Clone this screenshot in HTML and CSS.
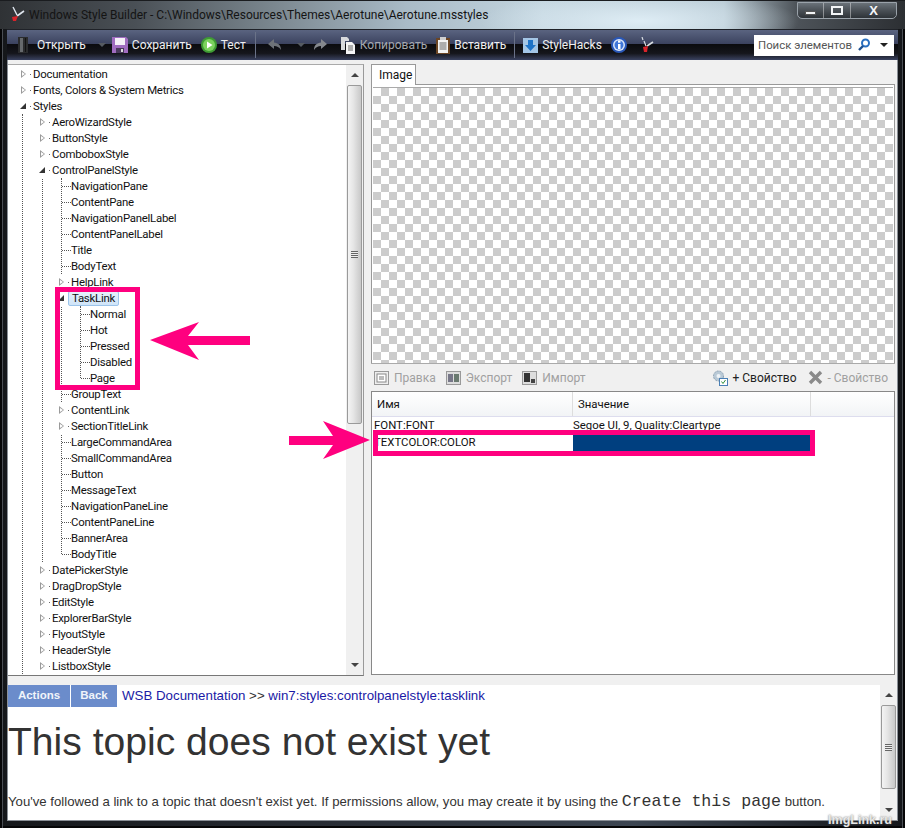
FILE: index.html
```html
<!DOCTYPE html>
<html lang="en">
<head>
  <meta charset="UTF-8" />
  <title>Windows Style Builder</title>
  <link rel="stylesheet" href="styles.css">
</head>
<body>
  <div class="window">
    <div class="titlebar">
      <svg class="app-icon" width="16" height="16" viewBox="0 0 16 16"><path d="M3 1l4 8" stroke="#dfe6ee" stroke-width="1.4"/><path d="M14 5L7 10" stroke="#dfe6ee" stroke-width="1.6"/><path d="M2 11l6-1-2 5H3z" fill="#d8232a"/></svg>
      <span class="title-text">Windows Style Builder - C:\Windows\Resources\Themes\Aerotune\Aerotune.msstyles</span>
      <div class="win-buttons">
        <div class="win-btn win-min"><span></span></div>
        <div class="win-btn win-max"><span></span></div>
        <div class="win-btn win-close">X</div>
      </div>
    </div>

    <div class="toolbar">
      <div class="tool tool-open">
        <svg width="12" height="16" viewBox="0 0 12 16"><rect x="1" y="0" width="10" height="16" fill="#2a2b2d"/><rect x="3" y="1" width="3" height="14" fill="#66696c"/><rect x="8" y="1" width="1" height="14" fill="#111"/></svg>
        <span>Открыть</span>
      </div>
      <span class="caret caret-dim caret-open"></span>
      <div class="tool tool-save">
        <svg width="16" height="16" viewBox="0 0 16 16"><path d="M0 0h14l2 2v14H0z" fill="#a06cc0"/><rect x="3" y="1" width="10" height="7" fill="#f5f0f8"/><rect x="4" y="11" width="8" height="5" fill="#4a3a5c"/><rect x="9" y="12" width="2" height="3" fill="#ddd"/></svg>
        <span>Сохранить</span>
      </div>
      <div class="tool tool-test">
        <svg width="16" height="16" viewBox="0 0 16 16"><circle cx="8" cy="8" r="8" fill="#3f9c33"/><circle cx="8" cy="8" r="6" fill="#7cd25e"/><path d="M6 4.500l5.500 3.500L6 11.500z" fill="#fff"/></svg>
        <span>Тест</span>
      </div>
      <span class="tool-sep sep-edit"></span>
      <svg class="tool-icon" width="16" height="14" viewBox="0 0 16 14"><path d="M7 1L1 6l6 5V8c3 0 5 1 7 4 0-5-3-7-7-7.500z" fill="#6e7278"/></svg>
      <span class="caret caret-dim caret-gap"></span>
      <svg class="tool-icon" width="16" height="14" viewBox="0 0 16 14"><path d="M9 1l6 5-6 5V8c-3 0-5 1-7 4 0-5 3-7 7-7.500z" fill="#85888e"/></svg>
      <div class="tool tool-copy">
        <svg width="16" height="17" viewBox="0 0 16 17"><path d="M1 0h6l2 2v2H5v9H1z" fill="#d8dadd"/><path d="M6 5h6l3 3v9H6z" fill="#f6f6f6"/><path d="M8 9h5M8 11h5M8 13h5" stroke="#666"/></svg>
        <span>Копировать</span>
      </div>
      <div class="tool tool-paste">
        <svg width="14" height="17" viewBox="0 0 14 17"><rect x="0" y="1" width="14" height="16" fill="#6b4524"/><rect x="2" y="3" width="10" height="13" fill="#f2f2f2"/><rect x="4" y="0" width="6" height="3" fill="#cfcfcf"/><path d="M3.500 6h7M3.500 8h7M3.500 10h7M3.500 12h7" stroke="#666"/></svg>
        <span>Вставить</span>
      </div>
      <span class="tool-sep sep-hacks"></span>
      <div class="tool tool-hacks">
        <svg width="15" height="15" viewBox="0 0 15 15"><rect width="15" height="15" fill="#a4c6e6"/><path d="M5 2h5v5h3l-5.500 6L2 7h3z" fill="#1f74c8"/></svg>
        <span>StyleHacks</span>
      </div>
      <svg class="tool-icon info-icon" width="16" height="16" viewBox="0 0 16 16"><circle cx="8" cy="8" r="8" fill="#2a58b8"/><circle cx="8" cy="8" r="6" fill="#dbe6f8"/><circle cx="8" cy="8" r="4.500" fill="#3f76d8"/><rect x="7" y="7" width="2.500" height="5" fill="#fff"/><rect x="7" y="3.500" width="2.500" height="2.200" fill="#fff"/></svg>
      <svg class="tool-icon brush-icon" width="14" height="16" viewBox="0 0 14 16"><path d="M2 0l1 3M4 4l2 5" stroke="#d8dde2" stroke-width="1.200"/><path d="M13 5L7 9" stroke="#d8dde2" stroke-width="1.600"/><path d="M3 10l5-1-1 6H4z" fill="#d8232a"/></svg>
      <div class="search">
        <span class="search-text">Поиск элементов</span>
        <svg width="14" height="14" viewBox="0 0 14 14"><circle cx="8.500" cy="5" r="3.500" fill="none" stroke="#2a6fc0" stroke-width="2"/><path d="M6 8l-4 4" stroke="#1c4f90" stroke-width="2.400"/></svg>
        <span class="caret caret-dark"></span>
      </div>
    </div>

    <div class="client">
      <div class="workspace">
        <div class="tree-pane">
          <div class="tree-scroll">
            <ul class="tree">
              <li><div class="row"><span class="twist"></span><i class="dot"></i>Documentation</div></li>
              <li><div class="row"><span class="twist"></span><i class="dot"></i>Fonts, Colors &amp; System Metrics</div></li>
              <li>
                <div class="row"><span class="twist open"></span><i class="dot"></i>Styles</div>
                <ul class="styles-list">
                  <li><div class="row"><span class="twist"></span><i class="dot"></i>AeroWizardStyle</div></li>
                  <li><div class="row"><span class="twist"></span><i class="dot"></i>ButtonStyle</div></li>
                  <li><div class="row"><span class="twist"></span><i class="dot"></i>ComboboxStyle</div></li>
                  <li>
                    <div class="row"><span class="twist open"></span><i class="dot"></i>ControlPanelStyle</div>
                    <ul>
                      <li><div class="row"><span class="leaf"></span>NavigationPane</div></li>
                      <li><div class="row"><span class="leaf"></span>ContentPane</div></li>
                      <li><div class="row"><span class="leaf"></span>NavigationPanelLabel</div></li>
                      <li><div class="row"><span class="leaf"></span>ContentPanelLabel</div></li>
                      <li><div class="row"><span class="leaf"></span>Title</div></li>
                      <li><div class="row"><span class="leaf"></span>BodyText</div></li>
                      <li><div class="row"><span class="twist"></span><i class="dot"></i>HelpLink</div></li>
                      <li>
                        <div class="row"><span class="twist open"></span><i class="dot"></i><span class="selected">TaskLink</span></div>
                        <ul>
                          <li><div class="row"><span class="leaf"></span>Normal</div></li>
                          <li><div class="row"><span class="leaf"></span>Hot</div></li>
                          <li><div class="row"><span class="leaf"></span>Pressed</div></li>
                          <li><div class="row"><span class="leaf"></span>Disabled</div></li>
                          <li><div class="row"><span class="leaf"></span>Page</div></li>
                        </ul>
                      </li>
                      <li><div class="row"><span class="leaf"></span>GroupText</div></li>
                      <li><div class="row"><span class="twist"></span><i class="dot"></i>ContentLink</div></li>
                      <li><div class="row"><span class="twist"></span><i class="dot"></i>SectionTitleLink</div></li>
                      <li><div class="row"><span class="leaf"></span>LargeCommandArea</div></li>
                      <li><div class="row"><span class="leaf"></span>SmallCommandArea</div></li>
                      <li><div class="row"><span class="leaf"></span>Button</div></li>
                      <li><div class="row"><span class="leaf"></span>MessageText</div></li>
                      <li><div class="row"><span class="leaf"></span>NavigationPaneLine</div></li>
                      <li><div class="row"><span class="leaf"></span>ContentPaneLine</div></li>
                      <li><div class="row"><span class="leaf"></span>BannerArea</div></li>
                      <li><div class="row"><span class="leaf"></span>BodyTitle</div></li>
                    </ul>
                  </li>
                  <li><div class="row"><span class="twist"></span><i class="dot"></i>DatePickerStyle</div></li>
                  <li><div class="row"><span class="twist"></span><i class="dot"></i>DragDropStyle</div></li>
                  <li><div class="row"><span class="twist"></span><i class="dot"></i>EditStyle</div></li>
                  <li><div class="row"><span class="twist"></span><i class="dot"></i>ExplorerBarStyle</div></li>
                  <li><div class="row"><span class="twist"></span><i class="dot"></i>FlyoutStyle</div></li>
                  <li><div class="row"><span class="twist"></span><i class="dot"></i>HeaderStyle</div></li>
                  <li><div class="row"><span class="twist"></span><i class="dot"></i>ListboxStyle</div></li>
                </ul>
              </li>
            </ul>
          </div>
          <div class="scrollbar">
            <span class="sb-up"></span>
            <div class="sb-thumb thumb-tree"><span class="grip"></span></div>
            <span class="sb-down"></span>
          </div>
        </div>

        <div class="right-pane">
          <div class="tabs"><div class="tab">Image</div></div>
          <div class="image-box"><div class="checker"></div></div>
          <div class="actions">
            <div class="action">
              <svg width="15" height="14" viewBox="0 0 15 14"><rect x=".5" y=".5" width="14" height="13" fill="#eee" stroke="#999"/><rect x="3" y="3" width="9" height="8" fill="#fff" stroke="#888"/><path d="M5 6h5M5 8h5" stroke="#777"/></svg>
              Правка
            </div>
            <div class="action">
              <svg width="15" height="14" viewBox="0 0 15 14"><rect x=".5" y=".5" width="14" height="13" fill="#ddd" stroke="#999"/><rect x="2" y="3" width="5" height="8" fill="#778"/><rect x="8" y="3" width="5" height="8" fill="#6a7a70"/></svg>
              Экспорт
            </div>
            <div class="action">
              <svg width="15" height="14" viewBox="0 0 15 14"><rect x=".5" y=".5" width="14" height="13" fill="#ddd" stroke="#999"/><rect x="2" y="2" width="6" height="9" fill="#333"/><rect x="9" y="8" width="4" height="4" fill="#444"/></svg>
              Импорт
            </div>
            <div class="action action-add">
              <svg width="16" height="16" viewBox="0 0 16 16"><circle cx="6.500" cy="6" r="5" fill="#b9c9d6" stroke="#8aa0b2" stroke-dasharray="2 1"/><circle cx="6.500" cy="6" r="2" fill="#eef3f7"/><rect x="7.500" y="8.500" width="8" height="7" fill="#fff" stroke="#4a7fb5"/><path d="M9.500 11.500l1.500 2 2.500-3.500" stroke="#2f8f3a" fill="none"/></svg>
              + Свойство
            </div>
            <div class="action action-del">
              <svg width="15" height="15" viewBox="0 0 15 15"><path d="M2 2l11 11M13 2L2 13" stroke="#8a8a8a" stroke-width="3.400"/></svg>
              - Свойство
            </div>
          </div>
          <div class="grid">
            <div class="grid-head">
              <div class="col-name">Имя</div>
              <div class="col-value">Значение</div>
            </div>
            <div class="grid-row">
              <div class="col-name">FONT:FONT</div>
              <div class="col-value">Segoe UI, 9, Quality:Cleartype</div>
            </div>
            <div class="grid-row">
              <div class="col-name">TEXTCOLOR:COLOR</div>
              <div class="col-value swatch"></div>
            </div>
          </div>
        </div>
      </div>

      <div class="docs">
        <div class="docs-body">
          <div class="docs-nav">
            <span class="docs-btn btn-actions">Actions</span>
            <span class="docs-btn btn-back">Back</span>
            <span class="crumbs"><span class="crumb">WSB Documentation</span> &gt;&gt; <span class="crumb">win7:styles:controlpanelstyle:tasklink</span></span>
          </div>
          <h1>This topic does not exist yet</h1>
          <p>You've followed a link to a topic that doesn't exist yet. If permissions allow, you may create it by using the <code>Create this page</code> button.</p>
        </div>
        <div class="scrollbar">
          <span class="sb-up"></span>
          <div class="sb-thumb thumb-docs"><span class="grip"></span></div>
          <span class="sb-down"></span>
        </div>
      </div>
    </div>
  </div>

  <!-- annotations drawn on top of the screenshot -->
  <div class="mark mark-tree"></div>
  <div class="mark mark-row"></div>
  <svg class="arrow arrow-left" width="100" height="38" viewBox="0 0 100 38"><path d="M0 18L49 0l-11 14h62v9H38l11 15z"/></svg>
  <svg class="arrow arrow-right" width="81" height="38" viewBox="0 0 81 38"><path d="M81 19L34 0l10 15H0v9h44L34 38z"/></svg>
  <div class="watermark">ImgLink.ru</div>
</body>
</html>
```

FILE: styles.css
```css
* {
  box-sizing: border-box;
}
html, body {
  margin: 0;
  height: 100%;
}
body {
  position: relative;
  overflow: hidden;
  width: 905px;
  height: 828px;
  background: #1c1f24;
  font-family: Roboto, "Open Sans", sans-serif;
  font-size: 11.4px;
  color: #111;
}
.window {
  display: flex;
  flex-direction: column;
  height: 828px;
  padding: 0 7px 7px;
  background: linear-gradient(90deg, #15171a 0, #2b3038 40%, #3d4652 70%, #14161a 100%);
  box-shadow: inset 2px 0 #060607, inset 3px 0 #4a4e54, inset -2px 0 #060607, inset -3px 0 #4a4e54, inset 0 -2px #060607;
}

/* title bar */
.titlebar {
  display: flex;
  align-items: flex-start;
  height: 29px;
  margin: 0 -7px;
  padding: 5px 8px 0 10px;
  border-top: 1px solid #1a1c1f;
  background:
    radial-gradient(ellipse 160px 30px at 640px 20px, rgba(226, 240, 248, .9), rgba(226, 240, 248, 0)),
    linear-gradient(90deg, #2f3235 0, #4a5056 15%, #7a868e 30%, #a9bbc7 45%, #c3d5df 60%, #b6c8d2 80%, #4d5359 88%, #2c2f33 100%);
}
.app-icon {
  margin-right: 3px;
}
.title-text {
  font-size: 12px;
  line-height: 18px;
  color: #141414;
}
.win-buttons {
  display: flex;
  margin-left: auto;
  margin-top: -4px;
  height: 17px;
  border: 1px solid #9aa2aa;
  border-radius: 0 0 5px 5px;
}
.win-btn {
  display: flex;
  align-items: center;
  justify-content: center;
  height: 100%;
  border-right: 1px solid rgba(255, 255, 255, .4);
  background: linear-gradient(#6a7279 0, #4a5056 50%, #2e3338 100%);
}
.win-min {
  width: 26px;
  border-radius: 0 0 0 5px;
}
.win-min span {
  width: 11px;
  height: 4px;
  margin-top: 5px;
  background: #f2f4f6;
  border: 1px solid #555;
}
.win-max {
  width: 27px;
}
.win-max span {
  width: 12px;
  height: 9px;
  border: 2px solid #f2f4f6;
}
.win-close {
  width: 45px;
  border-right: 0;
  border-radius: 0 0 5px 0;
  color: #f4f6f8;
  font-family: "Liberation Sans", sans-serif;
  font-weight: bold;
  font-size: 13px;
}

/* toolbar */
.toolbar {
  display: flex;
  align-items: center;
  height: 31px;
  padding-left: 10px;
  font-size: 12px;
  color: #f0f0f0;
  background: linear-gradient(#5a6480 0, #3c4360 45%, #0a0a0e 46%, #15161c 78%, #3a4260 100%);
  border-top: 1px solid #1f2228;
}
.tool {
  display: flex;
  align-items: center;
  gap: 4px;
}
.tool-open {
  gap: 8px;
}
.caret-open {
  margin-left: 12px;
}
.tool-save {
  margin-left: 6px;
}
.tool-test {
  margin-left: 9px;
}
.tool-copy {
  margin-left: 12px;
  color: #a4a8ae;
}
.tool-paste {
  margin-left: 9px;
}
.tool-hacks {
  margin-left: 8px;
}
.tool-icon {
  flex: none;
}
.info-icon {
  margin-left: 9px;
}
.brush-icon {
  margin-left: 13px;
}
.tool-sep {
  width: 1px;
  height: 26px;
  background: #6a7288;
}
.sep-edit {
  margin: 0 11px 0 9px;
}
.sep-hacks {
  margin-left: 8px;
}
.caret {
  width: 0;
  height: 0;
  border: 4px solid transparent;
  border-top-color: #fff;
  border-bottom: 0;
}
.caret-dim {
  border-top-color: #555a62;
}
.caret-gap {
  margin: 0 7px 0 14px;
}
.caret-dark {
  margin-left: 9px;
  border-top-color: #222;
}
.search {
  display: flex;
  align-items: center;
  width: 140px;
  height: 21px;
  margin-left: auto;
  margin-right: 4px;
  padding: 0 6px 0 4px;
  font-size: 11.4px;
  background: #fff;
  color: #555;
}
.search-text {
  flex: 1;
}

/* tree and image panes */
.client {
  display: flex;
  flex: 1;
  flex-direction: column;
  min-height: 0;
  border: 1px solid #8a8f96;
  border-top: 0;
}
.workspace {
  display: flex;
  flex: 1;
  min-height: 0;
  background: #f0f0f0;
  padding-top: 4px;
}
.tree-pane {
  display: flex;
  width: 356px;
  height: 612px;
  background: #fff;
  border-top: 1px solid #aaa;
  border-right: 1px solid #999;
  border-bottom: 1px solid #777;
}
.tree-scroll {
  flex: 1;
  overflow: hidden;
  padding: 1px 0 0 10px;
  letter-spacing: -.25px;
}
.tree, .tree ul {
  position: relative;
  margin: 0;
  padding: 0;
  list-style: none;
}
.tree ul {
  padding-left: 19px;
}
.tree ul::before {
  content: "";
  position: absolute;
  left: 24px;
  top: 0;
  bottom: 8px;
  border-left: 1px dotted #555;
}
.tree .styles-list::before {
  bottom: 0;
}
.tree .styles-list::after {
  content: "";
  position: absolute;
  left: 4px;
  top: 0;
  bottom: 0;
  border-left: 1px dotted #555;
}
.row {
  position: relative;
  display: flex;
  align-items: center;
  height: 16px;
  white-space: nowrap;
}
.twist {
  flex: none;
  position: relative;
  display: block;
  width: 10px;
  height: 16px;
  background: #fff;
}
.twist::before, .twist::after {
  content: "";
  position: absolute;
  border: 0 solid transparent;
}
.twist::before {
  left: 3px;
  top: 4px;
  border-width: 4px 0 4px 5px;
  border-left-color: #9a9a9a;
}
.twist::after {
  left: 4px;
  top: 6px;
  border-width: 2px 0 2px 3px;
  border-left-color: #fff;
}
.twist.open::before {
  left: 2px;
  top: 5px;
  border-width: 0 0 6px 6px;
  border-left-color: transparent;
  border-bottom-color: #333;
}
.twist.open::after {
  display: none;
}
.dot {
  width: 5px;
  flex: none;
}
.dot::after {
  content: "";
  display: block;
  width: 1px;
  height: 1px;
  margin-left: 2px;
  background: #666;
}
.leaf {
  flex: none;
  width: 9px;
  margin: 0 0 0 6px;
  border-top: 1px dotted #555;
}
.selected {
  margin-left: -3px;
  padding: 0 3px;
  line-height: 13px;
  border: 1px solid #9cc4ea;
  border-radius: 2px;
  background: linear-gradient(#e6f1fb, #cfe4f8);
}

/* scrollbars */
.scrollbar {
  display: flex;
  flex: none;
  flex-direction: column;
  width: 17px;
  background: #f0f0f0;
}
.sb-up, .sb-down {
  flex: none;
  display: flex;
  align-items: center;
  justify-content: center;
  height: 20px;
}
.sb-up::after, .sb-down::after {
  content: "";
  border: 4px solid transparent;
  border-top: 0;
  border-bottom-color: #444;
}
.sb-down {
  margin-top: auto;
}
.sb-down::after {
  border-bottom: 0;
  border-top: 4px solid #444;
}
.sb-thumb {
  display: flex;
  align-items: center;
  justify-content: center;
  margin: 0 1px;
  border: 1px solid #9a9a9a;
  border-radius: 2px;
  background: linear-gradient(90deg, #f4f4f4, #e6e6e6 40%, #c8c8c8);
}
.thumb-tree {
  height: 339px;
}
.thumb-docs {
  height: 84px;
}
.grip {
  width: 7px;
  height: 7px;
  background: repeating-linear-gradient(#666 0 1px, #eee 1px 2px);
}

.right-pane {
  display: flex;
  flex-direction: column;
  width: 524px;
  margin-left: 7px;
  height: 611px;
}
.tabs {
  display: flex;
  height: 21px;
}
.tab {
  width: 45px;
  padding-left: 7px;
  font-size: 12px;
  line-height: 20px;
  background: #fff;
  border: 1px solid #999;
  border-bottom: 0;
  z-index: 1;
}
.image-box {
  height: 279px;
  padding: 1px 1px 0;
  margin-top: -1px;
  border: 1px solid #999;
  border-bottom: 0;
  background: #fff;
}
.checker {
  height: 100%;
  margin-top: 1px;
  border-top: 1px solid #aaa;
  background-color: #fff;
  background-image: conic-gradient(#ccc 25%, #fff 25% 50%, #ccc 50% 75%, #fff 75%);
  background-size: 16px 16px;
}
.actions {
  display: flex;
  align-items: center;
  gap: 10px;
  height: 28px;
  padding-left: 3px;
  font-size: 12px;
  color: #a0a0a0;
  border-top: 1px solid #aaa;
}
.action {
  display: flex;
  align-items: center;
  gap: 5px;
}
.action-add {
  margin-left: auto;
  margin-right: 1px;
  color: #222;
}
.action-del {
  margin-right: 7px;
}
.grid {
  flex: 1;
  background: #fff;
  border: 1px solid #888;
}
.grid-head {
  display: flex;
  height: 25px;
  line-height: 25px;
  background: linear-gradient(#fff, #f2f4f6);
  border-bottom: 1px solid #dde;
}
.grid-head .col-name, .grid-head .col-value {
  border-right: 1px solid #ddd;
  padding-left: 5px;
}
.grid-row {
  display: flex;
  height: 17px;
  line-height: 17px;
}
.col-name {
  width: 201px;
  padding-left: 2px;
}
.col-value {
  width: 238px;
}
.swatch {
  background: #003f7f;
}

/* documentation pane */
.docs {
  display: flex;
  height: 135px;
  background: #f0f0f0;
}
.docs-body {
  flex: 1;
  overflow: hidden;
  background: #fff;
  font-family: "Liberation Sans", sans-serif;
  color: #333;
}
.docs-nav {
  display: flex;
  align-items: center;
  height: 22px;
}
.docs-btn {
  margin-right: 1px;
  padding-bottom: 1px;
  line-height: 21px;
  text-align: center;
  color: #f0f4fa;
  font-weight: bold;
  font-size: 11.5px;
  background: #6b8ccb;
}
.btn-actions {
  width: 62px;
}
.btn-back {
  width: 46px;
}
.crumbs {
  margin: 0 0 2px 4px;
  font-size: 13.3px;
}
.crumb {
  color: #1a1aa6;
}
h1 {
  margin: 12px 0 0;
  font-size: 39.1px;
  font-weight: normal;
  line-height: 46px;
  white-space: nowrap;
}
p {
  margin: 29px 0 0;
  font-size: 13.2px;
  line-height: 16px;
  white-space: nowrap;
}
code {
  font-family: "Liberation Mono", monospace;
  font-size: 16.6px;
}

/* pink annotations */
.mark {
  position: absolute;
  border: 5px solid #ff007f;
}
.mark-tree {
  left: 55px;
  top: 287px;
  width: 85px;
  height: 103px;
}
.mark-row {
  left: 373px;
  top: 430px;
  width: 442px;
  height: 26px;
}
.arrow {
  position: absolute;
  fill: #ff007f;
}
.arrow-left {
  left: 150px;
  top: 322px;
}
.arrow-right {
  left: 289px;
  top: 421px;
}
.watermark {
  position: absolute;
  right: 13px;
  bottom: 1px;
  font-family: "Liberation Sans", sans-serif;
  font-size: 12.5px;
  line-height: 14px;
  font-weight: bold;
  color: #e8e8e8;
  text-shadow: 0 0 2px #666;
}
```
